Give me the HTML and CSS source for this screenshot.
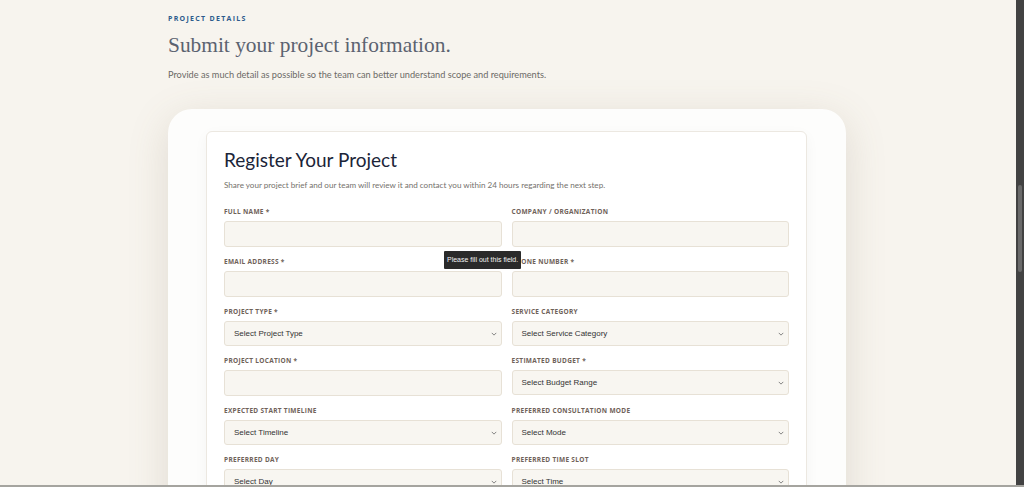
FILE: index.html
```html
<!DOCTYPE html>
<html lang="en">
<head>
    <meta charset="UTF-8">
    <meta name="viewport" content="width=device-width, initial-scale=1.0">
    <title>Project Details</title>
    <link rel="stylesheet" href="styles.css">
</head>
<body>
    <div class="page">
        <section class="intro">
            <span class="eyebrow">PROJECT DETAILS</span>
            <h1>Submit your project information.</h1>
            <p>Provide as much detail as possible so the team can better understand scope and requirements.</p>
        </section>

        <div class="outer-card">
            <form class="form-card">
                <h2>Register Your Project</h2>
                <p class="form-sub">Share your project brief and our team will review it and contact you within 24 hours regarding the next step.</p>

                <div class="form-grid">
                    <div class="field">
                        <label>FULL NAME *</label>
                        <div class="input"></div>
                    </div>
                    <div class="field">
                        <label>COMPANY / ORGANIZATION</label>
                        <div class="input"></div>
                    </div>

                    <div class="field">
                        <label>EMAIL ADDRESS *</label>
                        <div class="input"></div>
                        <div class="tooltip">Please fill out this field.</div>
                    </div>
                    <div class="field">
                        <label>PHONE NUMBER *</label>
                        <div class="input"></div>
                    </div>

                    <div class="field">
                        <label>PROJECT TYPE *</label>
                        <div class="input select"><span>Select Project Type</span><svg viewBox="0 0 8 5"><path d="M1 1l3 3 3-3"/></svg></div>
                    </div>
                    <div class="field">
                        <label>SERVICE CATEGORY</label>
                        <div class="input select"><span>Select Service Category</span><svg viewBox="0 0 8 5"><path d="M1 1l3 3 3-3"/></svg></div>
                    </div>

                    <div class="field">
                        <label>PROJECT LOCATION *</label>
                        <div class="input"></div>
                    </div>
                    <div class="field">
                        <label>ESTIMATED BUDGET *</label>
                        <div class="input select"><span>Select Budget Range</span><svg viewBox="0 0 8 5"><path d="M1 1l3 3 3-3"/></svg></div>
                    </div>

                    <div class="field">
                        <label>EXPECTED START TIMELINE</label>
                        <div class="input select"><span>Select Timeline</span><svg viewBox="0 0 8 5"><path d="M1 1l3 3 3-3"/></svg></div>
                    </div>
                    <div class="field">
                        <label>PREFERRED CONSULTATION MODE</label>
                        <div class="input select"><span>Select Mode</span><svg viewBox="0 0 8 5"><path d="M1 1l3 3 3-3"/></svg></div>
                    </div>

                    <div class="field">
                        <label>PREFERRED DAY</label>
                        <div class="input select"><span>Select Day</span><svg viewBox="0 0 8 5"><path d="M1 1l3 3 3-3"/></svg></div>
                    </div>
                    <div class="field">
                        <label>PREFERRED TIME SLOT</label>
                        <div class="input select"><span>Select Time</span><svg viewBox="0 0 8 5"><path d="M1 1l3 3 3-3"/></svg></div>
                    </div>
                </div>
            </form>
        </div>
    </div>

    <div class="scrollbar"><div class="thumb"></div></div>
    <div class="frame-line"></div>
</body>
</html>
```

FILE: styles.css
```css
body {
    margin: 0;
    padding: 0;
    background-color: #f7f4ee;
    font-family: Lato, "Noto Sans", sans-serif;
    color: #555;
    height: 487px;
    overflow: hidden;
}

.page {
    width: 678px;
    margin: 0 auto;
    padding-right: 10px;
    padding-top: 14px;
}

.eyebrow {
    display: block;
    font-family: "Open Sans", sans-serif;
    font-size: 7px;
    font-weight: 700;
    letter-spacing: 1.3px;
    color: #2d5b8c;
    line-height: 9px;
}

.intro h1 {
    margin: 8px 0 0;
    font-family: "Liberation Serif", serif;
    font-weight: 400;
    font-size: 21.4px;
    line-height: 28px;
    color: #5b6270;
}

.intro p {
    margin: 10px 0 0;
    font-size: 9.2px;
    line-height: 12px;
    color: #6c6a66;
}

.outer-card {
    margin-top: 28px;
    background-color: #fdfdfc;
    border-radius: 24px;
    padding: 22px 39px 40px 38px;
    box-shadow: 0 10px 40px rgba(120, 105, 80, 0.18);
}

.form-card {
    background-color: #ffffff;
    border: 1px solid #ece8e1;
    border-radius: 6px;
    padding: 14px 17px 20px 17px;
    box-shadow: 0 4px 14px rgba(0, 0, 0, 0.04);
}

.form-card h2 {
    margin: 0;
    font-family: Lato, sans-serif;
    font-weight: 400;
    font-size: 19px;
    line-height: 28px;
    color: #1b2438;
}

.form-sub {
    margin: 6px 0 0;
    font-size: 8.1px;
    line-height: 11px;
    color: #74716c;
}

.form-grid {
    margin-top: 17px;
    display: grid;
    grid-template-columns: 1fr 1fr;
    column-gap: 10px;
    row-gap: 11px;
}

.field {
    position: relative;
}

.field label {
    display: block;
    font-family: "Open Sans", sans-serif;
    font-size: 6.5px;
    font-weight: 700;
    letter-spacing: 0.3px;
    line-height: 8px;
    color: #6f6259;
    margin-bottom: 5px;
}

.input {
    height: 24px;
    background-color: #f8f6f1;
    border: 1px solid #e7e1d6;
    border-radius: 3px;
}

.select {
    height: 23px;
    display: flex;
    align-items: center;
    justify-content: space-between;
    padding: 0 4px 0 9px;
    font-family: "Liberation Sans", Arial, sans-serif;
    font-size: 8px;
    color: #333;
}

.select svg {
    width: 6px;
    height: 4px;
    fill: none;
    stroke: #777;
    stroke-width: 1.2;
}

.tooltip {
    position: absolute;
    left: 220px;
    top: -7px;
    background-color: #2a2a2a;
    color: #f2f2f2;
    font-family: "Liberation Sans", Arial, sans-serif;
    font-size: 7px;
    line-height: 18px;
    padding: 0 3px;
    border-radius: 1px;
    white-space: nowrap;
    z-index: 5;
}

.scrollbar {
    position: fixed;
    top: 0;
    right: 0;
    width: 8px;
    height: 100%;
    background-color: #424242;
}

.scrollbar .thumb {
    position: absolute;
    top: 185px;
    left: 2px;
    width: 4px;
    height: 87px;
    border-radius: 2px;
    background-color: #6a6a6a;
}

.frame-line {
    position: fixed;
    left: 0;
    bottom: 0;
    width: 100%;
    height: 2px;
    background-color: #a5a49f;
}
```
